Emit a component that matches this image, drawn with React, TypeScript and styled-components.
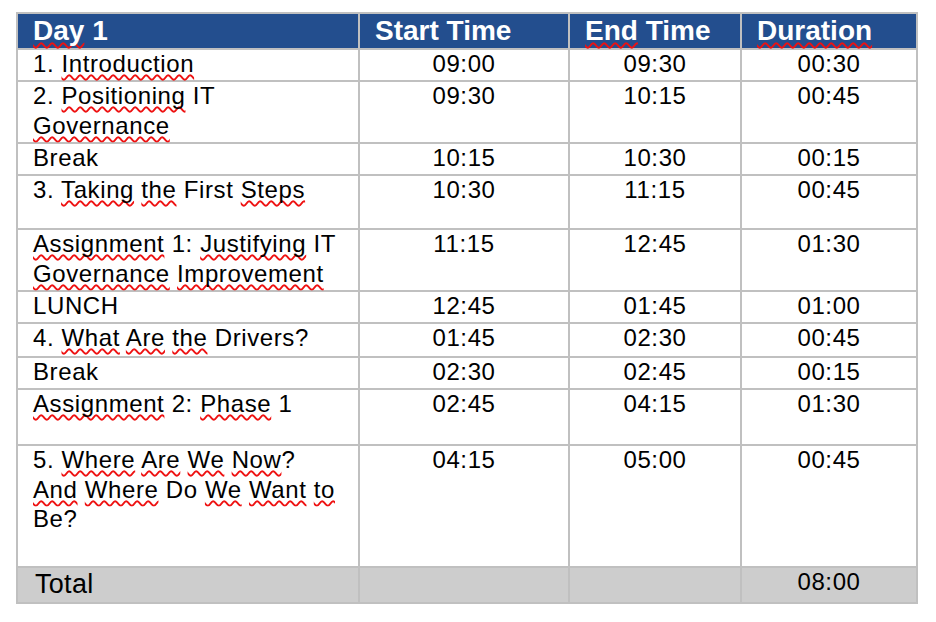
import { Fragment } from "react";
import styled, { createGlobalStyle } from "styled-components";

const GlobalStyle = createGlobalStyle`
  html, body {
    margin: 0;
    padding: 0;
    background: #ffffff;
  }
`;

type Session = {
  title: string;
  start: string;
  end: string;
  duration: string;
  height: number;
};

// words wrapped in ~ ~ get the red spell-check squiggle
const sessions: Session[] = [
  { title: "1. ~Introduction~", start: "09:00", end: "09:30", duration: "00:30", height: 30 },
  { title: "2. ~Positioning~ IT\n~Governance~", start: "09:30", end: "10:15", duration: "00:45", height: 60 },
  { title: "Break", start: "10:15", end: "10:30", duration: "00:15", height: 30 },
  { title: "3. ~Taking~ ~the~ First ~Steps~", start: "10:30", end: "11:15", duration: "00:45", height: 52 },
  {
    title: "~Assignment~ 1: ~Justifying~ IT\n~Governance~ ~Improvement~",
    start: "11:15",
    end: "12:45",
    duration: "01:30",
    height: 60,
  },
  { title: "LUNCH", start: "12:45", end: "01:45", duration: "01:00", height: 30 },
  { title: "4. ~What~ ~Are~ ~the~ Drivers?", start: "01:45", end: "02:30", duration: "00:45", height: 32 },
  { title: "Break", start: "02:30", end: "02:45", duration: "00:15", height: 30 },
  { title: "~Assignment~ 2: ~Phase~ 1", start: "02:45", end: "04:15", duration: "01:30", height: 54 },
  {
    title: "5. ~Where~ ~Are~ ~We~ ~Now~?\n~And~ ~Where~ Do ~We~ ~Want~ ~to~\nBe?",
    start: "04:15",
    end: "05:00",
    duration: "00:45",
    height: 120,
  },
];

function marked(text: string) {
  return text.split("~").map((part, i) =>
    i % 2 === 1 ? <Squiggle key={i}>{part}</Squiggle> : <Fragment key={i}>{part}</Fragment>
  );
}

export default function App() {
  const rowHeights = [34, ...sessions.map((s) => s.height), 34].map((h) => `${h}px`).join(" ");

  return (
    <Page>
      <GlobalStyle />
      <Schedule $rows={rowHeights}>
        <HeadCell>{marked("~Day~ 1")}</HeadCell>
        <HeadCell>Start Time</HeadCell>
        <HeadCell>{marked("~End~ Time")}</HeadCell>
        <HeadCell>{marked("~Duration~")}</HeadCell>

        {sessions.map((s, i) => (
          <Fragment key={i}>
            <Cell>
              <Text>{marked(s.title)}</Text>
            </Cell>
            <Cell $center>
              <Text>{s.start}</Text>
            </Cell>
            <Cell $center>
              <Text>{s.end}</Text>
            </Cell>
            <Cell $center>
              <Text>{s.duration}</Text>
            </Cell>
          </Fragment>
        ))}

        <TotalCell>
          <TotalLabel>Total</TotalLabel>
        </TotalCell>
        <TotalCell />
        <TotalCell />
        <TotalCell $center>
          <Text>08:00</Text>
        </TotalCell>
      </Schedule>
    </Page>
  );
}

const Page = styled.div`
  padding: 12px 0 0 16px;
  font-family: "Liberation Sans", Arial, sans-serif;
`;

const Schedule = styled.div<{ $rows: string }>`
  display: grid;
  grid-template-columns: 340px 208px 170px 174px;
  grid-template-rows: ${(p) => p.$rows};
  gap: 2px;
  padding: 2px;
  width: max-content;
  background: #c0c0c0;
`;

const HeadCell = styled.div`
  background: #234e8e;
  color: #ffffff;
  font-weight: 700;
  font-size: 28px;
  line-height: 34px;
  padding-left: 15px;
  white-space: nowrap;
`;

const Cell = styled.div<{ $center?: boolean }>`
  background: #ffffff;
  color: #000000;
  font-size: 24px;
  letter-spacing: 0.6px;
  line-height: 29.5px;
  padding: 0 6px 0 15px;
  text-align: ${(p) => (p.$center ? "center" : "left")};
  ${(p) => p.$center && "padding: 0;"}
  white-space: pre-line;
`;

const TotalCell = styled(Cell)`
  background: #cdcdcd;
`;

const Text = styled.div`
  margin-top: -1px;
`;

const TotalLabel = styled.div`
  font-size: 27px;
  letter-spacing: 0.3px;
  line-height: 32px;
  padding-left: 2px;
`;

const Squiggle = styled.span`
  text-decoration-line: underline;
  text-decoration-style: wavy;
  text-decoration-color: #ee1111;
  text-decoration-thickness: 1.6px;
  text-underline-offset: 2px;
  text-decoration-skip-ink: none;
`;
